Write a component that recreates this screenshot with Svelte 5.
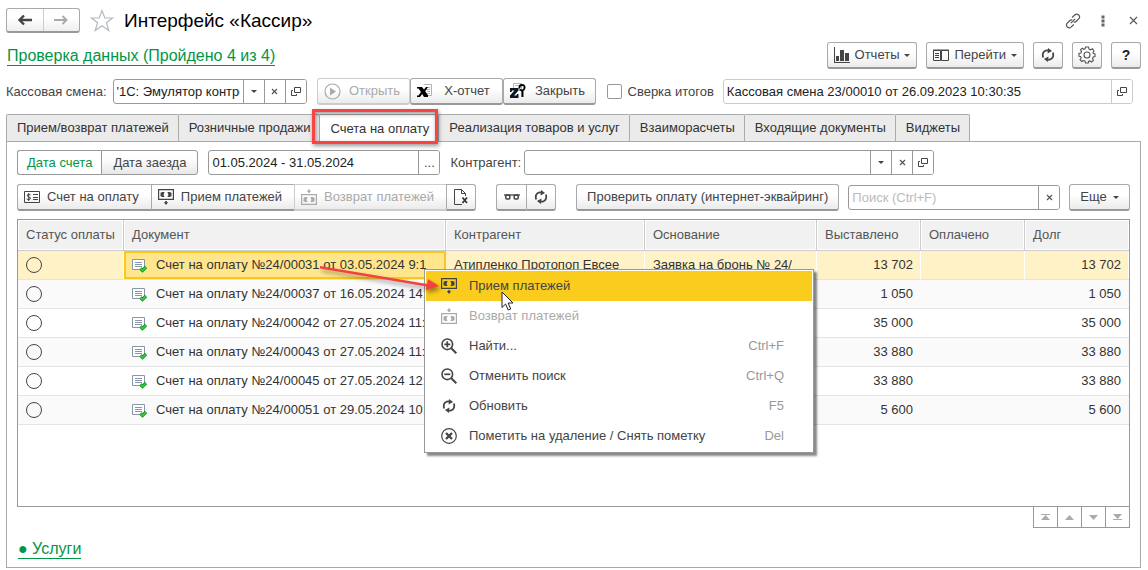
<script lang="ts">
  interface Invoice {
    title: string;
    client: string;
    basis: string;
    billed: string;
    debt: string;
  }

  interface MenuItem {
    icon: string;
    label: string;
    keys?: string;
    disabled?: boolean;
  }

  const tabs = [
    'Прием/возврат платежей',
    'Розничные продажи',
    'Счета на оплату',
    'Реализация товаров и услуг',
    'Взаиморасчеты',
    'Входящие документы',
    'Виджеты',
  ];

  const invoices: Invoice[] = [
    { title: 'Счет на оплату №24/00031 от 03.05.2024 9:1', client: 'Атипленко Протопоп Евсее', basis: 'Заявка на бронь № 24/', billed: '13 702', debt: '13 702' },
    { title: 'Счет на оплату №24/00037 от 16.05.2024 14:...', client: '', basis: '', billed: '1 050', debt: '1 050' },
    { title: 'Счет на оплату №24/00042 от 27.05.2024 11:...', client: '', basis: '', billed: '35 000', debt: '35 000' },
    { title: 'Счет на оплату №24/00043 от 27.05.2024 11:...', client: '', basis: '', billed: '33 880', debt: '33 880' },
    { title: 'Счет на оплату №24/00045 от 27.05.2024 12:...', client: '', basis: '', billed: '33 880', debt: '33 880' },
    { title: 'Счет на оплату №24/00051 от 29.05.2024 10:...', client: '', basis: '', billed: '5 600', debt: '5 600' },
  ];

  const menu: MenuItem[] = [
    { icon: 'payin', label: 'Прием платежей' },
    { icon: 'payout', label: 'Возврат платежей', disabled: true },
    { icon: 'find', label: 'Найти...', keys: 'Ctrl+F' },
    { icon: 'unfind', label: 'Отменить поиск', keys: 'Ctrl+Q' },
    { icon: 'refresh', label: 'Обновить', keys: 'F5' },
    { icon: 'delete', label: 'Пометить на удаление / Снять пометку', keys: 'Del' },
  ];

  let activeTab = $state(2);
  let selected = $state(0);
  let hovered = $state(0);
  let dateMode = $state('bill');
  let reconcile = $state(false);
  let device = $state("'1С: Эмулятор контрольно-кассовой техники");
  let shift = $state('Кассовая смена 23/00010 от 26.09.2023 10:30:35');
  let period = $state('01.05.2024 - 31.05.2024');
  let client = $state('');
  let search = $state('');
</script>

{#snippet icon(name: string)}
  {#if name === 'back'}
    <svg width="16" height="12" viewBox="0 0 16 12"><path d="M15 6H3M7 1.5L2.5 6L7 10.5" fill="none" stroke="#444" stroke-width="2.4" /></svg>
  {:else if name === 'forward'}
    <svg width="16" height="12" viewBox="0 0 16 12"><path d="M1 6H13M9.500 2L13.500 6L9.500 10" fill="none" stroke="#aaa" stroke-width="1.900" /></svg>
  {:else if name === 'star'}
    <svg width="24" height="24" viewBox="0 0 24 24"><path d="M12 1.5L14.8 9H22.6L16.4 13.7L18.8 21.6L12 16.8L5.2 21.6L7.6 13.7L1.4 9H9.2Z" fill="#fff" stroke="#b4b8be" stroke-width="1.200" /></svg>
  {:else if name === 'link'}
    <svg width="16" height="16" viewBox="0 0 17 17" fill="none" stroke="#555" stroke-width="1.3"><path d="M7.5 4.8L10.6 1.9Q12.5 .3 14.5 2.1Q16.4 4.1 14.8 6L11.8 9Q10.8 10 9.2 9.7M9.3 12.2L6.4 15Q4.5 16.7 2.5 14.9Q.7 12.9 2.2 11L5.2 8Q6.3 7 7.7 7.3M6.2 10.8L10.8 6.2" /></svg>
  {:else if name === 'dots'}
    <svg width="4" height="12" viewBox="0 0 4 12"><path d="M.5 .5h3v3h-3zM.5 4.5h3v3h-3zM.5 8.500h3v3h-3z" fill="#666" /></svg>
  {:else if name === 'close'}
    <svg width="9" height="9" viewBox="0 0 9 9"><path d="M1 1L8 8M8 1L1 8" stroke="#555" stroke-width="1.100" /></svg>
  {:else if name === 'cross'}
    <svg width="7" height="7" viewBox="0 0 7 7"><path d="M1 1L6 6M6 1L1 6" stroke="#555" stroke-width="1.200" /></svg>
  {:else if name === 'caret'}
    <svg width="6" height="3" viewBox="0 0 6 3"><path d="M0 0H6L3 3Z" fill="#444" /></svg>
  {:else if name === 'open'}
    <svg width="10" height="9" viewBox="0 0 10 9" fill="none" stroke="#444"><path d="M3.500 .5H9.500V5.500H3.500ZM2 3.500H.5V8.500H5.500V7" /></svg>
  {:else if name === 'chart'}
    <svg width="16" height="16" viewBox="0 0 16 16"><path d="M0 0H1V15H16V16H0ZM2 9H5V14H2ZM6 3H10V14H6ZM11 6H15V14H11Z" fill="#444" /></svg>
  {:else if name === 'book'}
    <svg width="16" height="13" viewBox="0 0 16 13" fill="none" stroke="#444"><path d="M.5 1.500H7.500V11.500H.5ZM8.500 1.500H15.500V11.500H8.500ZM0 1H16M2 4.500H6M2 6.500H6M2 8.500H6" /></svg>
  {:else if name === 'refresh'}
    <svg width="16" height="16" viewBox="-1 -1 18 18"><path d="M2.500 10.800Q.8 5 5.500 3Q7 2.500 9 3M13.500 5.200Q15.200 11 10.500 13Q9 13.500 7 13" fill="none" stroke="#444" stroke-width="2" /><path d="M8 0L12.600 3.400L7.500 6.400ZM8 16L3.400 12.600L8.500 9.600Z" fill="#444" /></svg>
  {:else if name === 'gear'}
    <svg width="18" height="18" viewBox="0 0 18 18" fill="none" stroke="#555" stroke-width="1.100"><path d="M7.500 1H10.500L11 3.100L12.700 3.800L14.500 2.700L16 5L15 6.600L15.300 7.600L17 8V10.500L15.200 11L14.500 12.700L15.500 14.300L13.500 16L12 14.900L10.700 15.300L10.300 17H7.500L7 15.200L5.400 14.500L3.800 15.500L2 13.600L3.200 12L2.600 10.500L1 10.200V7.500L2.800 7L3.500 5.400L2.500 3.900L4.200 2.200L5.900 3.300L7 2.800Z" /><circle cx="9" cy="9" r="3" /></svg>
  {:else if name === 'play'}
    <svg width="17" height="17" viewBox="0 0 17 17"><circle cx="8.500" cy="8.500" r="7.500" fill="none" stroke="#aaa" stroke-width="1.200" /><path d="M6 4.500L12 8.500L6 12.500Z" fill="#aaa" /></svg>
  {:else if name === 'xreport'}
    <svg width="16" height="16" viewBox="0 0 16 16"><path d="M6.500 1.500H14.500V12.500H9M9 4.500H13M9 6.500H13M10 8.500H13M10 10.500H13" fill="#fff" stroke="#b4b4b4" /><path d="M0 4H5L7 6.500L9 4H11L8.200 8.200L11 12.200V14H7L5.200 11L3 14H0V12.500H1.500L4 9L1.500 5.500H0Z" fill="#000" /></svg>
  {:else if name === 'zreport'}
    <svg width="16" height="16" viewBox="0 0 16 16"><path d="M3.500 5V.5H11.500V13.500" fill="#fff" stroke="#b4b4b4" /><path d="M5 2.500H10" stroke="#b4b4b4" /><path d="M0 5H8.500V7.500L4 12.500H6.500L7 11H8.500V15H0V12.500L4.500 7.500H2L1.500 9H0Z" fill="#0b1626" /><path d="M9.500 5.500Q9 2 12 2Q15 2 14.500 5Q14.300 7 12.500 7.500V14" fill="none" stroke="#000" stroke-width="1.900" /><path d="M9.500 6.500L12.500 8" stroke="#000" stroke-width="1.500" /></svg>
  {:else if name === 'bill'}
    <svg width="16" height="12" viewBox="0 0 16 12"><path d="M.5 .5H15.500V11.500H.5ZM9 3.500H14M9 6.500H14M9 8.500H14" fill="none" stroke="#444" /><path d="M6.500 4Q4.500 2.500 3.300 3.800Q2.700 5.300 4.700 5.800Q7 6.500 6.200 8Q4.900 9.300 2.700 8M4.700 2V10" fill="none" stroke="#444" /></svg>
  {:else if name === 'payin' || name === 'payout'}
    <svg width="16" height="16" viewBox="0 0 16 16">
      <g transform={name === 'payout' ? 'translate(0 5)' : undefined}>
        <path d="M.6 .6H15.400V10.400H.6Z" fill="none" stroke="currentColor" stroke-width="1.200" />
        <path d="M3.500 3H6.600Q4.800 5.500 6.600 8H3.500V7.200H2.500V3.800H3.500ZM12.500 3H9.400Q11.200 5.500 9.400 8H12.500V7.200H13.500V3.800H12.500Z" fill="currentColor" />
      </g>
      {#if name === 'payin'}
        <path d="M7.200 12H8.800V13.200H10.200L8 16L5.800 13.200H7.200Z" fill="currentColor" />
      {:else}
        <path d="M7.200 4V2.800H5.800L8 0L10.200 2.800H8.800V4Z" fill="currentColor" />
      {/if}
    </svg>
  {:else if name === 'docx'}
    <svg width="15" height="16" viewBox="0 0 15 16" fill="none"><path d="M11.500 7V4.500L7.500 .5H.5V15.500H8M7.500 .5V4.500H11.500" stroke="#444" /><path d="M8.500 8.500L13 14M13 8.500L8.500 14" stroke="#333" stroke-width="1.700" /></svg>
  {:else if name === 'glasses'}
    <svg width="16" height="6" viewBox="0 0 16 6" fill="none" stroke="#444" stroke-width="1.500"><path d="M0 1H16" stroke-width="1.300" /><rect x="1.800" y="1" width="4" height="4" rx="1" /><rect x="10.200" y="1" width="4" height="4" rx="1" /></svg>
  {:else if name === 'doc'}
    <svg width="16" height="15" viewBox="0 0 16 15" fill="none"><path d="M.5 1.500H12.500V11.500H.5Z" fill="#fff" stroke="#8796a8" /><path d="M3 4.500H10M3 6.500H10M3 8.500H10" stroke="#8796a8" /><path d="M8.500 10.500L10.500 12.500L14 9" stroke="#158f1d" stroke-width="3.200" /><path d="M8.500 10.500L10.500 12.500L14 9" stroke="#3ccc46" stroke-width="1.600" /></svg>
  {:else if name === 'find' || name === 'unfind'}
    <svg width="16" height="16" viewBox="0 0 16 16" fill="none" stroke="#444"><circle cx="6.300" cy="6.300" r="5.300" stroke-width="1.600" /><path d="M10 10L15.300 15.300" stroke-width="2" /><path d={name === 'find' ? 'M3.300 6.300H9.300M6.300 3.300V9.300' : 'M3.300 6.300H9.300'} stroke-width="1.700" /></svg>
  {:else if name === 'delete'}
    <svg width="16" height="16" viewBox="0 0 16 16" fill="none" stroke="#444"><circle cx="8" cy="8" r="7.300" stroke-width="1.200" /><path d="M5 5L11 11M11 5L5 11" stroke-width="2.300" /></svg>
  {:else if name === 'first'}
    <svg width="9" height="6" viewBox="0 0 9 6"><path d="M0 0H9V1H0ZM0 6L4.500 1L9 6Z" fill="#aaa" /></svg>
  {:else if name === 'prev'}
    <svg width="9" height="5" viewBox="0 0 9 5"><path d="M0 5L4.500 0L9 5Z" fill="#aaa" /></svg>
  {:else if name === 'next'}
    <svg width="9" height="5" viewBox="0 0 9 5"><path d="M0 0L4.500 5L9 0Z" fill="#aaa" /></svg>
  {:else if name === 'last'}
    <svg width="9" height="6" viewBox="0 0 9 6"><path d="M0 5H9V6H0ZM0 0L4.500 5L9 0Z" fill="#aaa" /></svg>
  {/if}
{/snippet}

<main class="page">
  <header class="title">
    <div class="history">
      <button type="button" aria-label="Назад">{@render icon('back')}</button>
      <button type="button" aria-label="Вперед">{@render icon('forward')}</button>
    </div>
    <button type="button" class="bare" aria-label="В избранное">{@render icon('star')}</button>
    <h1>Интерфейс «Кассир»</h1>
    <div class="window">
      <button type="button" class="bare" aria-label="Ссылка">{@render icon('link')}</button>
      <button type="button" class="bare" aria-label="Меню">{@render icon('dots')}</button>
      <button type="button" class="bare" aria-label="Закрыть окно">{@render icon('close')}</button>
    </div>
  </header>

  <div class="row commands">
    <a class="check" href="#check">Проверка данных (Пройдено 4 из 4)</a>
    <button type="button" class="btn">{@render icon('chart')}Отчеты{@render icon('caret')}</button>
    <button type="button" class="btn">{@render icon('book')}Перейти{@render icon('caret')}</button>
    <button type="button" class="btn square" aria-label="Обновить">{@render icon('refresh')}</button>
    <button type="button" class="btn square" aria-label="Настройки">{@render icon('gear')}</button>
    <button type="button" class="btn square help" aria-label="Справка">?</button>
  </div>

  <div class="row shift">
    <label for="device">Кассовая смена:</label>
    <div class="field device">
      <input id="device" type="text" bind:value={device} />
      <button type="button" aria-label="Выбрать">{@render icon('caret')}</button>
      <button type="button" aria-label="Очистить" onclick={() => (device = '')}>{@render icon('cross')}</button>
      <button type="button" aria-label="Открыть карточку">{@render icon('open')}</button>
    </div>
    <div class="cash">
      <button type="button" class="btn" disabled>{@render icon('play')}<span>Открыть</span></button>
      <button type="button" class="btn">{@render icon('xreport')}<span>X-отчет</span></button>
      <button type="button" class="btn">{@render icon('zreport')}<span>Закрыть</span></button>
    </div>
    <label class="tick"><input type="checkbox" bind:checked={reconcile} />Сверка итогов</label>
    <div class="field current">
      <input type="text" aria-label="Текущая смена" bind:value={shift} />
      <button type="button" aria-label="Открыть смену">{@render icon('open')}</button>
    </div>
  </div>

  <div class="tabs" role="tablist">
    {#each tabs as tab, i}
      <button type="button" role="tab" class="tab" class:active={i === activeTab} aria-selected={i === activeTab} onclick={() => (activeTab = i)}>
        {tab}
        {#if i === 2}<span class="frame"></span>{/if}
      </button>
    {/each}
  </div>

  <section class="panel">
    <div class="row filters">
      <div class="modes">
        <button type="button" class:on={dateMode === 'bill'} aria-pressed={dateMode === 'bill'} onclick={() => (dateMode = 'bill')}>Дата счета</button>
        <button type="button" class:on={dateMode === 'arrival'} aria-pressed={dateMode === 'arrival'} onclick={() => (dateMode = 'arrival')}>Дата заезда</button>
      </div>
      <div class="field period">
        <input type="text" aria-label="Период" bind:value={period} />
        <button type="button" aria-label="Выбрать период">...</button>
      </div>
      <label for="client">Контрагент:</label>
      <div class="field client">
        <input id="client" type="text" bind:value={client} />
        <button type="button" aria-label="Выбрать">{@render icon('caret')}</button>
        <button type="button" aria-label="Очистить" onclick={() => (client = '')}>{@render icon('cross')}</button>
        <button type="button" aria-label="Открыть карточку">{@render icon('open')}</button>
      </div>
    </div>

    <div class="row tools">
      <div class="group">
        <button type="button" class="btn">{@render icon('bill')}Счет на оплату</button>
        <button type="button" class="btn">{@render icon('payin')}Прием платежей</button>
        <button type="button" class="btn" disabled>{@render icon('payout')}Возврат платежей</button>
        <button type="button" class="btn square" aria-label="Удалить документ">{@render icon('docx')}</button>
      </div>
      <div class="group view">
        <button type="button" class="btn square" aria-label="Просмотр">{@render icon('glasses')}</button>
        <button type="button" class="btn square" aria-label="Обновить список">{@render icon('refresh')}</button>
      </div>
      <button type="button" class="btn verify">Проверить оплату (интернет-эквайринг)</button>
      <div class="field search">
        <input type="text" aria-label="Поиск" placeholder="Поиск (Ctrl+F)" bind:value={search} />
        <button type="button" aria-label="Очистить поиск" onclick={() => (search = '')}>{@render icon('cross')}</button>
      </div>
      <button type="button" class="btn more">Еще{@render icon('caret')}</button>
    </div>

    <div class="grid">
      <table>
        <colgroup>
          <col class="c-status" /><col /><col class="c-client" /><col class="c-basis" /><col class="c-sum" /><col class="c-sum" /><col class="c-sum" />
        </colgroup>
        <thead>
          <tr>
            <th>Статус оплаты</th>
            <th>Документ</th>
            <th>Контрагент</th>
            <th>Основание</th>
            <th>Выставлено</th>
            <th>Оплачено</th>
            <th>Долг</th>
          </tr>
        </thead>
        <tbody>
          {#each invoices as invoice, i}
            <tr class:selected={i === selected} onclick={() => (selected = i)}>
              <td><span class="ring"></span></td>
              <td class="title-cell"><span class="doc">{@render icon('doc')}{invoice.title}</span></td>
              <td>{invoice.client}</td>
              <td>{invoice.basis}</td>
              <td class="num">{invoice.billed}</td>
              <td class="num"></td>
              <td class="num">{invoice.debt}</td>
            </tr>
          {/each}
        </tbody>
      </table>
    </div>
    <div class="pager">
      <button type="button" aria-label="В начало">{@render icon('first')}</button>
      <button type="button" aria-label="Выше">{@render icon('prev')}</button>
      <button type="button" aria-label="Ниже">{@render icon('next')}</button>
      <button type="button" aria-label="В конец">{@render icon('last')}</button>
    </div>
    <a class="services" href="#services">● Услуги</a>
  </section>

  <div class="menu" role="menu">
    {#each menu as item, i}
      <button type="button" role="menuitem" class:hover={i === hovered} disabled={item.disabled} onmouseenter={() => (hovered = i)}>
        {@render icon(item.icon)}
        <span class="label">{item.label}</span>
        <span class="keys">{item.keys ?? ''}</span>
      </button>
    {/each}
  </div>

  <svg class="arrow" width="130" height="40" viewBox="0 0 130 40" aria-hidden="true">
    <path d="M5 6L112 24L113 19L124 26L111 30L111.500 26.500L5 8.500Z" fill="#f44040" />
  </svg>
  <svg class="cursor" width="14" height="21" viewBox="0 0 14 21" aria-hidden="true">
    <path d="M1 1V16.500L4.600 13L7.200 19L9.700 18L7.200 12H12Z" fill="#fff" stroke="#222" />
  </svg>
</main>

<style>
  :global(body) { margin: 0; background: #fff; }
  .page { position: relative; box-sizing: border-box; min-height: 100vh; display: flex; flex-direction: column; padding: 8px 7px 2px 6px; font: 13px/16px 'Liberation Sans', Arial, sans-serif; color: #444; }
  svg { display: block; flex: none; }
  button, input { font: inherit; color: inherit; }
  button { box-sizing: border-box; margin: 0; padding: 0; display: flex; align-items: center; justify-content: center; white-space: nowrap; }
  label { white-space: nowrap; }
  .bare { border: 0; background: none; }
  .row { display: flex; align-items: center; }

  .title { display: flex; align-items: center; height: 25px; }
  .history { display: flex; width: 74px; height: 25px; box-sizing: border-box; border: 1px solid #aaa; border-bottom: 2px solid #999; border-radius: 3px; background: linear-gradient(#fff 40%, #eee); margin-right: 10px; }
  .history button { flex: 1; border: 0; background: none; }
  .history button + button { border-left: 1px solid #ccc; }
  h1 { margin: 0 0 0 10px; font-size: 19px; line-height: 24px; font-weight: 400; color: #000; flex: 1; }
  .window { display: flex; align-items: center; gap: 14px; }
  .window button { width: 16px; }

  .commands { gap: 9px; margin-top: 9px; }
  .check { margin: 2px auto 0 1px; font-size: 16px; line-height: 18px; color: #009646; text-decoration: none; border-bottom: 1px solid #009646; }
  .btn { height: 27px; padding: 0 7px; gap: 6px; border: 1px solid #aaa; border-bottom: 2px solid #999; border-radius: 3px; background: linear-gradient(#fff 40%, #ebebeb); color: #444; }
  .btn:disabled { color: #aaa; border-color: #ccc; }
  .commands .btn { padding: 0 6px; gap: 5px; }
  .commands .square { padding: 0; }
  .square { width: 30px; padding: 0; }
  .help { font-weight: 700; font-size: 14px; color: #222; }

  .shift { margin: 9px 8px 0 0; }
  .field { box-sizing: border-box; display: flex; height: 25px; border: 1px solid #999; border-radius: 3px; background: #fff; overflow: hidden; }
  .field input { box-sizing: border-box; flex: 1; width: 0; min-width: 0; border: 0; padding: 0 0 0 3px; outline: 0; background: none; color: #222; }
  .field input::placeholder { color: #bbb; opacity: 1; }
  .field button { width: 21px; border: 0; border-left: 1px solid #999; background: #fff; }
  .device { width: 194px; margin: 0 10px 0 6px; }
  .device input { margin-right: 3px; }
  .cash { display: flex; }
  .cash .btn { width: 93px; gap: 0; justify-content: flex-start; padding: 0 0 0 6px; }
  .cash span { flex: 1; text-align: center; }
  .tick { display: flex; align-items: center; gap: 6px; margin: 0 9px 0 11px; }
  .tick input { appearance: none; box-sizing: border-box; width: 15px; height: 15px; margin: 0; border: 1px solid #999; border-radius: 2px; background: #fff; }
  .tick input:checked { background: #999; }
  .current { flex: 1; border-color: #ccc; }
  .current button { border-color: #ccc; }

  .tabs { display: flex; margin-top: 9px; position: relative; }
  .tab { position: relative; height: 27px; padding: 0 9px 0 10px; border: 1px solid #aaa; border-left-width: 0; border-bottom: 0; border-radius: 0 2px 0 0; background: #ebebeb; color: #333; }
  .tab:first-child { border-left-width: 1px; border-radius: 2px 2px 0 0; }
  .tab.active { height: 28px; margin-bottom: -1px; background: #fff; z-index: 1; }
  .frame { position: absolute; inset: -6px 0 -2px -8px; border: 3px solid #fa4444; box-shadow: 1px 2px 4px #0006, inset 1px 2px 4px #0006; }

  .panel { flex: 1; display: flex; flex-direction: column; padding: 8px 10px 8px; border: 1px solid #aaa; }
  .modes { display: flex; margin-right: 10px; }
  .modes button { height: 25px; padding: 0 11px; border: 1px solid #999; border-radius: 0 3px 3px 0; background: linear-gradient(#fff 30%, #e8e8e8); }
  .modes button:first-child { padding: 0 9px; border-right: 0; border-radius: 3px 0 0 3px; }
  .modes .on { background: #fff; color: #009646; }
  .period { width: 232px; margin-right: 10px; }
  .client { flex: 0 1 410px; margin-left: 3px; }
  .tools { margin-top: 9px; }
  .group { display: flex; margin-right: 20px; }
  .group .btn { border-radius: 0; padding: 0 12px 0 6px; gap: 7px; border-right-width: 0; }
  .group .square { width: 30px; padding: 0; }
  .group .btn:first-child { border-radius: 3px 0 0 3px; }
  .group .btn:last-child { border-radius: 0 3px 3px 0; border-right-width: 1px; }
  .verify { padding: 0 10px; margin-right: 9px; }
  .search { flex: 1; margin-right: 9px; }
  .more { width: 61px; }

  .grid { flex: 1; margin-top: 8px; border: 1px solid #999; min-height: 220px; overflow: hidden; }
  table { width: 100%; table-layout: fixed; border-collapse: separate; border-spacing: 0; color: #333; }
  .c-status { width: 106px; }
  .c-client { width: 199px; }
  .c-basis { width: 172px; }
  .c-sum { width: 104px; }
  th, td { box-sizing: border-box; padding: 0 8px; overflow: hidden; white-space: nowrap; text-align: left; font-weight: 400; }
  th { height: 31px; background: #f1f1f1; border-right: 1px solid #ccc; border-bottom: 1px solid #ccc; box-shadow: inset 0 0 0 1px #fff; color: #555; }
  th:last-child { border-right: 0; }
  td { height: 29px; border-bottom: 1px solid #e4e4e4; }
  tbody tr:nth-child(even) { background: #fafafa; }
  .selected td { background: #fff2c7; box-shadow: inset -1px 0 #fff; }
  .selected .title-cell { background: #ffe58c; box-shadow: inset 0 0 0 2px #f9c81e; }
  .num { text-align: right; }
  .doc { display: flex; align-items: center; gap: 8px; }
  .ring { display: block; box-sizing: border-box; width: 16px; height: 16px; border: 1px solid #444; border-radius: 50%; }
  .pager { align-self: flex-end; display: flex; }
  .pager button { width: 24px; height: 21px; border: 1px solid #999; border-width: 0 1px 1px 0; background: #fff; }
  .pager button:first-child { width: 25px; border-left-width: 1px; }
  .services { align-self: flex-start; margin: 12px 0 0 1px; font-size: 16px; line-height: 18px; color: #009646; text-decoration: none; border-bottom: 1px solid #009646; }

  /* The context menu lies over the list, with the pointer on its first item. */
  .menu { position: absolute; left: 424px; top: 269px; width: 390px; box-sizing: border-box; padding: 1px; border: 1px solid #999; background: #fff; box-shadow: 3px 3px 2px #0007; }
  .menu button { width: 100%; height: 30px; padding: 0 28px 0 15px; gap: 12px; border: 0; background: none; color: #444; }
  .menu .hover { background: #facc1e; }
  .menu button:disabled { color: #aaa; }
  .label { flex: 1; text-align: left; }
  .keys { color: #999; }
  .arrow { position: absolute; left: 315px; top: 260px; filter: drop-shadow(2px 3px 2px #0006); pointer-events: none; }
  .cursor { position: absolute; left: 501px; top: 291px; pointer-events: none; }
</style>
